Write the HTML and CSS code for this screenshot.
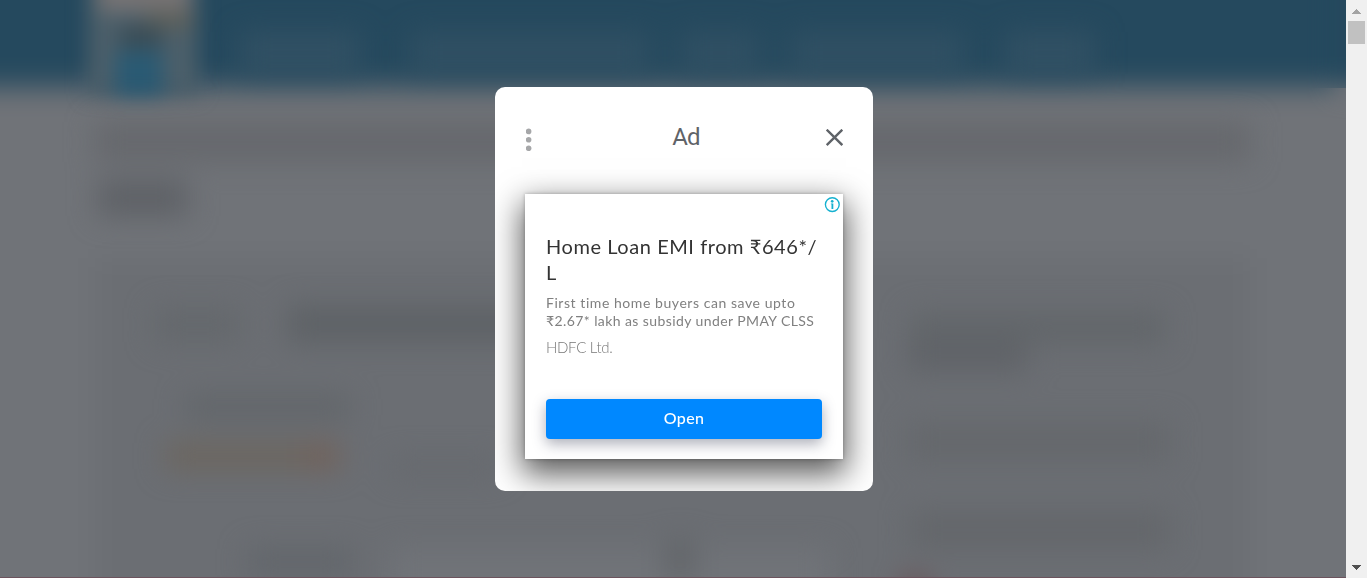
FILE: index.html
```html
<!DOCTYPE html>
<html lang="en">
<head>
<meta charset="utf-8">
<title>Ad</title>
<link rel="stylesheet" href="styles.css">
</head>
<body>
<div class="page">
  <main class="viewport">
    <svg class="backdrop" viewBox="0 0 1346 578" aria-hidden="true">
      <defs>
        <filter id="soft" x="-50" y="-60" width="1450" height="700" filterUnits="userSpaceOnUse" color-interpolation-filters="sRGB"><feGaussianBlur stdDeviation="10"/></filter>
        <filter id="softer" x="-50" y="-60" width="1450" height="700" filterUnits="userSpaceOnUse" color-interpolation-filters="sRGB"><feGaussianBlur stdDeviation="14"/></filter>
      </defs>
      <rect width="1346" height="578" fill="#707378"/>
      <rect x="1300" width="46" height="88" fill="#25495e"/>
      <g filter="url(#softer)">
        <rect x="-60" y="-60" width="1397" height="147" fill="#25495e"/>
        <rect x="-60" y="87" width="1397" height="560" fill="#707378"/>
        <rect x="1337" y="88" width="100" height="560" fill="#707378"/>
        <rect x="95" y="258" width="1155" height="400" fill="#6b6e73"/>
      </g>
      <g filter="url(#softer)">
        <rect x="240" y="32" width="120" height="42" fill="#345265" opacity=".8"/>
        <rect x="410" y="32" width="240" height="42" fill="#345265" opacity=".7"/>
        <rect x="680" y="32" width="80" height="42" fill="#345265" opacity=".7"/>
        <rect x="790" y="32" width="175" height="42" fill="#345265" opacity=".7"/>
        <rect x="1005" y="32" width="90" height="42" fill="#345265" opacity=".8"/>
        <rect x="95" y="122" width="1155" height="40" fill="#65676c" opacity=".9"/>
        <rect x="98" y="180" width="90" height="36" fill="#5e6166"/>
        <rect x="155" y="308" width="85" height="34" fill="#64686c"/>
        <rect x="288" y="305" width="240" height="38" fill="#5e6266"/>
        <rect x="185" y="396" width="165" height="22" fill="#616569"/>
        <rect x="165" y="442" width="175" height="28" fill="#6c665f"/>
        <rect x="303" y="442" width="36" height="28" fill="#72625a"/>
        <rect x="390" y="458" width="110" height="18" fill="#66696e"/>
        <rect x="248" y="548" width="105" height="28" fill="#62666b"/>
        <rect x="390" y="548" width="440" height="60" fill="#707378"/>
        <rect x="665" y="540" width="30" height="40" fill="#626569"/>
        <rect x="910" y="312" width="255" height="32" fill="#62666a"/>
        <rect x="908" y="338" width="120" height="34" fill="#606368"/>
        <rect x="908" y="422" width="262" height="40" fill="#65686c"/>
        <rect x="910" y="510" width="260" height="40" fill="#64676b"/>
        <rect x="902" y="576" width="26" height="28" fill="#6a5053"/>
      </g>
      <g filter="url(#soft)">
        <rect x="88" y="-60" width="110" height="154" fill="#4c5f6a"/>
        <rect x="98" y="-60" width="92" height="72" fill="#767374"/>
        <rect x="145" y="10" width="48" height="20" fill="#5c605c"/>
        <rect x="120" y="26" width="42" height="22" fill="#394c56"/>
        <rect x="115" y="50" width="48" height="46" fill="#2a5a73"/>
      </g>
      <rect y="577" width="1346" height="1" fill="#6c535d"/>
    </svg>
    <section class="dialog">
      <header class="dialog-head">
        <svg class="dots" width="6" height="24" viewBox="0 0 6 24"><g fill="#a6a7a9"><circle cx="2.6" cy="3.4" r="2.8"/><circle cx="2.6" cy="11.8" r="2.8"/><circle cx="2.6" cy="20.3" r="2.8"/></g></svg>
        <h1 class="title">Ad</h1>
        <svg class="close" width="18" height="18" viewBox="0 0 18 18"><path d="M1.7 .7 17.3 16.1M17.3 .7 1.7 16.1" stroke="#5f6368" stroke-width="2.4" fill="none"/></svg>
      </header>
      <article class="ad">
        <svg class="info" width="16" height="16" viewBox="0 0 16 16"><circle cx="8.3" cy="7.6" r="6.9" fill="none" stroke="#15b1d0" stroke-width="1.35"/><circle cx="8.2" cy="4.3" r="1.35" fill="#15b1d0"/><path d="M6.9 6.4h2.4v5.5H7.5V7.3h-.6z" fill="#15b1d0"/></svg>
        <h2 class="headline">Home Loan EMI from ₹646*/<br>L</h2>
        <p class="copy"><span class="line-one">First time home buyers can save upto</span><br><span class="line-two">₹2.67* lakh as subsidy under PMAY CLSS</span></p>
        <p class="brand">HDFC Ltd.</p>
        <a class="open">Open</a>
      </article>
    </section>
  </main>
  <aside class="scrollbar">
    <svg width="9" height="5" viewBox="0 0 9 5" shape-rendering="crispEdges"><path d="M0 5 4.5 0 9 5z" fill="#a3a3a3"/></svg>
    <div class="thumb"></div>
    <svg class="down" width="9" height="5" viewBox="0 0 9 5" shape-rendering="crispEdges"><path d="M0 0 4.5 5 9 0z" fill="#505050"/></svg>
  </aside>
</div>
</body>
</html>
```
FILE: styles.css
```css
* { box-sizing: border-box; }
body { margin: 0; overflow: hidden; }
h1, h2, p { margin: 0; font-weight: 400; }
.page { display: flex; width: 1367px; height: 578px; }
.viewport {
  position: relative;
  width: 1346px;
  padding: 87px 0 0 495px;
  overflow: hidden;
}
.backdrop { position: absolute; inset: 0; width: 1346px; height: 578px; }
.dialog {
  position: relative;
  width: 378px;
  height: 404px;
  padding: 0 30px;
  border-radius: 10px;
  background: #fff;
  overflow: hidden;
}
.dialog-head {
  display: flex;
  justify-content: space-between;
  align-items: flex-start;
  height: 107px;
  padding-top: 35px;
}
.dots { margin: 6px 0 0 1px; }
.title { margin-left: 15px; font: 400 24px/30px Roboto, sans-serif; letter-spacing: -.9px; color: #5f6368; }
.close { margin-top: 7px; }
.ad {
  position: relative;
  display: flex;
  flex-direction: column;
  height: 265px;
  padding: 39px 21px 20px;
  background: #fff;
  font-family: Lato, "Noto Sans", sans-serif;
  box-shadow: 0 12px 30px 3px rgba(0, 0, 0, .65), 0 0 4px rgba(0, 0, 0, .25);
}
.info { position: absolute; top: 3px; right: 3px; }
.headline {
  font-size: 20px;
  line-height: 26px;
  font-weight: 400;
  letter-spacing: .56px;
  color: #333;
  white-space: nowrap;
}
.copy { margin-top: 9px; font-size: 14px; line-height: 18px; color: #808080; white-space: nowrap; }
.line-one { letter-spacing: .56px; }
.line-two { letter-spacing: .41px; }
.brand { margin-top: 8px; font-size: 15px; line-height: 18px; font-weight: 300; letter-spacing: -.3px; color: #777; }
.open {
  margin-top: auto;
  height: 40px;
  border-radius: 4px;
  background: #08f;
  box-shadow: 0 5px 14px rgba(50, 55, 80, .4);
  color: #fff;
  font: 500 16px/38px Lato, sans-serif;
  letter-spacing: .4px;
  text-align: center;
}
.scrollbar {
  display: flex;
  flex-direction: column;
  align-items: center;
  width: 21px;
  padding: 9px 0 8px;
  background: #f0f0f0;
}
.thumb { width: 17px; height: 23px; margin-top: 7px; background: #c1c1c1; }
.down { margin-top: auto; }
```
